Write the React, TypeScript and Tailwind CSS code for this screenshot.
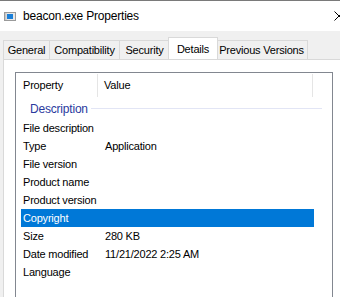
import * as React from "react";

const rows: { name: string; value?: string; selected?: boolean }[] = [
  { name: "File description" },
  { name: "Type", value: "Application" },
  { name: "File version" },
  { name: "Product name" },
  { name: "Product version" },
  { name: "Copyright", selected: true },
  { name: "Size", value: "280 KB" },
  { name: "Date modified", value: "11/21/2022 2:25 AM" },
  { name: "Language" },
];

const tabs: { label: string; w: string }[] = [
  { label: "General", w: "w-[47px]" },
  { label: "Compatibility", w: "w-[70px]" },
  { label: "Security", w: "w-[50px]" },
  { label: "Details", w: "w-[50px]" },
  { label: "Previous Versions", w: "w-[92px]" },
];

function AppIcon() {
  return (
    <svg width="12" height="9" viewBox="0 0 12 9" className="shrink-0">
      <rect x="0.5" y="0.5" width="11" height="8" fill="#e8e8e8" stroke="#9a9a9a" />
      <rect x="3" y="2" width="6" height="5" fill="#1a7fd8" />
      <rect x="1" y="1" width="1.5" height="7" fill="#c8c8c8" />
    </svg>
  );
}

export default function App() {
  return (
    <div
      className="w-[340px] h-[297px] overflow-hidden bg-[#f0f0f0] text-[11px] tracking-[-0.2px] text-black whitespace-nowrap"
      style={{ fontFamily: '"Liberation Sans", Arial, sans-serif' }}
    >
      {/* title bar */}
      <div className="h-[31px] bg-white border-t border-[#7a7a7a] flex items-center pl-[4px]">
        <AppIcon />
        <span className="ml-[7px] text-[12px] tracking-[-0.2px]">beacon.exe Properties</span>
        <svg width="10" height="10" viewBox="0 0 10 10" className="ml-auto mr-[-4px]">
          <path d="M0.5 0.5 L9.5 9.5 M9.5 0.5 L0.5 9.5" stroke="#000" strokeWidth="1" />
        </svg>
      </div>

      {/* tabs */}
      <div className="flex items-end pl-[3px] pt-[6px] h-[28px] relative z-10">
        {tabs.map((t, i) =>
          t.label === "Details" ? (
            <div
              key={t.label}
              className={
                t.w +
                " -mx-[2px] h-[22px] bg-white border border-b-0 border-[#d9d9d9] flex justify-center pt-[3px] relative z-10"
              }
            >
              {t.label}
            </div>
          ) : (
            <div
              key={t.label}
              className={
                t.w +
                " h-[19px] border-t border-r border-[#d9d9d9] flex items-center justify-center " +
                (i === 0 ? "border-l" : "")
              }
            >
              {t.label}
            </div>
          )
        )}
      </div>

      {/* panel */}
      <div className="ml-[3px] h-[240px] bg-white border-t border-l border-[#d9d9d9] pt-[12px] pl-[11px]">
        <div className="w-[318px] h-[240px] border border-[#828790] bg-white">
          {/* header */}
          <div className="h-[25px] flex items-center">
            <div className="w-[82px] shrink-0 pl-[7px] h-[23px] flex items-center border-r border-[#e5e5e5]">
              Property
            </div>
            <div className="w-[215px] shrink-0 pl-[6px] h-[23px] flex items-center border-r border-[#e5e5e5]">
              Value
            </div>
          </div>
          {/* group */}
          <div className="h-[21px] flex items-center">
            <span className="ml-[14px] text-[12px] tracking-[-0.2px] text-[#2a3a9e]">Description</span>
            <div className="ml-[3px] flex-1 mr-[10px] h-px bg-[#e2e5f5]" />
          </div>
          {rows.map((r) => (
            <div
              key={r.name}
              className={
                "ml-[5px] w-[293px] h-[18px] flex items-center " +
                (r.selected ? "bg-[#0078d7] text-white" : "")
              }
            >
              <div className="w-[84px] shrink-0 pl-[2px]">{r.name}</div>
              <div>{r.value ?? ""}</div>
            </div>
          ))}
        </div>
      </div>
    </div>
  );
}
